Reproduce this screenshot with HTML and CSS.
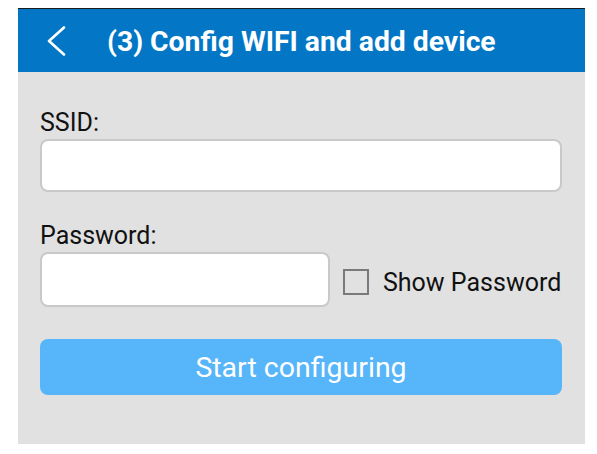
FILE: index.html
```html
<!DOCTYPE html>
<html>
<head>
<meta charset="utf-8">
<link rel="stylesheet" href="styles.css">
</head>
<body>
<div class="frame">
  <header class="topbar">
    <span class="back">
      <svg width="20" height="30" viewBox="0 0 20 30"><polyline points="18,1.5 3,15 18,28.5" fill="none" stroke="#fff" stroke-width="2.6" stroke-linecap="round" stroke-linejoin="round"/></svg>
    </span>
    <h1 class="title">(3) Config WIFI and add device</h1>
  </header>
  <main class="content">
    <label class="label label-ssid">SSID:</label>
    <div class="input input-ssid"></div>
    <label class="label label-pw">Password:</label>
    <div class="pw-row">
      <div class="input input-pw"></div>
      <span class="check"></span>
      <span class="check-text">Show Password</span>
    </div>
    <div class="btn">Start configuring</div>
  </main>
</div>
</body>
</html>
```
FILE: styles.css
```css
html, body {
  margin: 0;
  padding: 0;
  background: #ffffff;
}
body {
  font-family: Roboto, "Noto Sans", sans-serif;
}
.frame {
  margin: 8px 0 0 18px;
  width: 567px;
  height: 436px;
  background: #e1e1e1;
}
.topbar {
  height: 63px;
  border-top: 1px solid #1c1c1c;
  background: #0377c6;
  display: flex;
  align-items: center;
  padding-left: 28px;
}
.back {
  display: flex;
  width: 20px;
  height: 30px;
}
.title {
  margin: 0 0 0 41px;
  color: #ffffff;
  font-size: 28.3px;
  font-weight: 700;
  line-height: 32px;
  padding-top: 2px;
}
.content {
  padding: 0 23px 0 22px;
  display: flex;
  flex-direction: column;
}
.label {
  color: #111;
  font-size: 25px;
  line-height: 28px;
}
.label-ssid {
  margin-top: 37px;
}
.input {
  box-sizing: border-box;
  background: #fff;
  border: 2px solid #c9c9c9;
  border-radius: 8px;
}
.input-ssid {
  margin-top: 2px;
  height: 53px;
}
.label-pw {
  margin-top: 30px;
}
.pw-row {
  margin-top: 2px;
  display: flex;
  align-items: center;
}
.input-pw {
  width: 290px;
  height: 55px;
}
.check {
  box-sizing: border-box;
  width: 26px;
  height: 26px;
  margin-left: 13px;
  margin-top: 4px;
  border: 2px solid #7a7a7a;
  background: #e1e1e1;
}
.check-text {
  margin-left: 14px;
  margin-top: 5px;
  font-size: 25px;
  color: #111;
}
.btn {
  margin-top: 32px;
  height: 56px;
  border-radius: 8px;
  background: #57b5fa;
  color: #fff;
  font-size: 28.5px;
  display: flex;
  align-items: center;
  justify-content: center;
}
```
